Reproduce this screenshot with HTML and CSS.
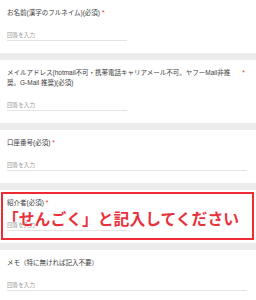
FILE: index.html
```html
<!DOCTYPE html>
<html lang="ja">

<head>
    <meta charset="UTF-8">
    <meta name="viewport" content="width=device-width, initial-scale=1.0">
    <title>フォーム</title>
    <link rel="stylesheet" href="styles.css">
</head>

<body>
    <div class="form">
        <div class="question">
            <div class="title">
                <span class="title_text">お名前(漢字のフルネイム)(必須)</span>
                <span class="required">*</span>
            </div>
            <div class="answer">回答を入力</div>
        </div>
        <div class="question">
            <div class="title long">
                <span class="title_text">メイルアドレス(hotmail不可・携帯電話キャリアメール不可。ヤフーMail非推<br>奨。G-Mail 推奨)(必須)</span>
                <span class="required">*</span>
            </div>
            <div class="answer">回答を入力</div>
        </div>
        <div class="question">
            <div class="title">
                <span class="title_text">口座番号(必須)</span>
                <span class="required">*</span>
            </div>
            <div class="answer wide">回答を入力</div>
        </div>
        <div class="question marked">
            <div class="title">
                <span class="title_text">紹介者(必須)</span>
                <span class="required">*</span>
            </div>
            <div class="answer">回答を入力</div>
            <!-- 赤枠の注意書き -->
            <div class="note">「せんごく」と記入してください</div>
        </div>
        <div class="question">
            <div class="title">
                <span class="title_text">メモ（特に無ければ記入不要）</span>
            </div>
            <div class="answer wide">回答を入力</div>
        </div>
    </div>
</body>

</html>
```
FILE: styles.css
```css
* {
    margin: 0px;
    padding: 0px;
    box-sizing: border-box;
}

body {
    background-color: #ececec;
    font-family: "Liberation Sans", "Noto Sans CJK JP", sans-serif;
}

.form {
    display: flex;
    flex-direction: column;
    gap: 7px;
}

.question {
    position: relative;
    padding: 8px 7px 12px 7px;
    background-color: #ffffff;
}

.title {
    display: flex;
    gap: 2px;
    font-size: 6.5px;
    line-height: 10px;
    color: #3c3c3c;
}

.title .title_text {
    max-width: 226px;
}

.title.long {
    gap: 12px;
}

.required {
    color: #d93025;
}

.answer {
    width: 120px;
    margin-top: 13px;
    padding-bottom: 1px;
    border-bottom: 1px solid #e4e4e4;
    font-size: 5.6px;
    line-height: 8px;
    color: #9a9a9a;
}

.answer.wide {
    width: 240px;
}

.note {
    position: absolute;
    top: 2px;
    left: 1px;
    right: 2px;
    height: 48px;
    display: flex;
    align-items: center;
    padding-top: 4px;
    padding-left: 0px;
    border: 2px solid #ee2a33;
    font-family: "Noto Sans CJK JP", sans-serif;
    font-size: 15.8px;
    font-weight: bold;
    color: #e8323c;
    white-space: nowrap;
}
```
